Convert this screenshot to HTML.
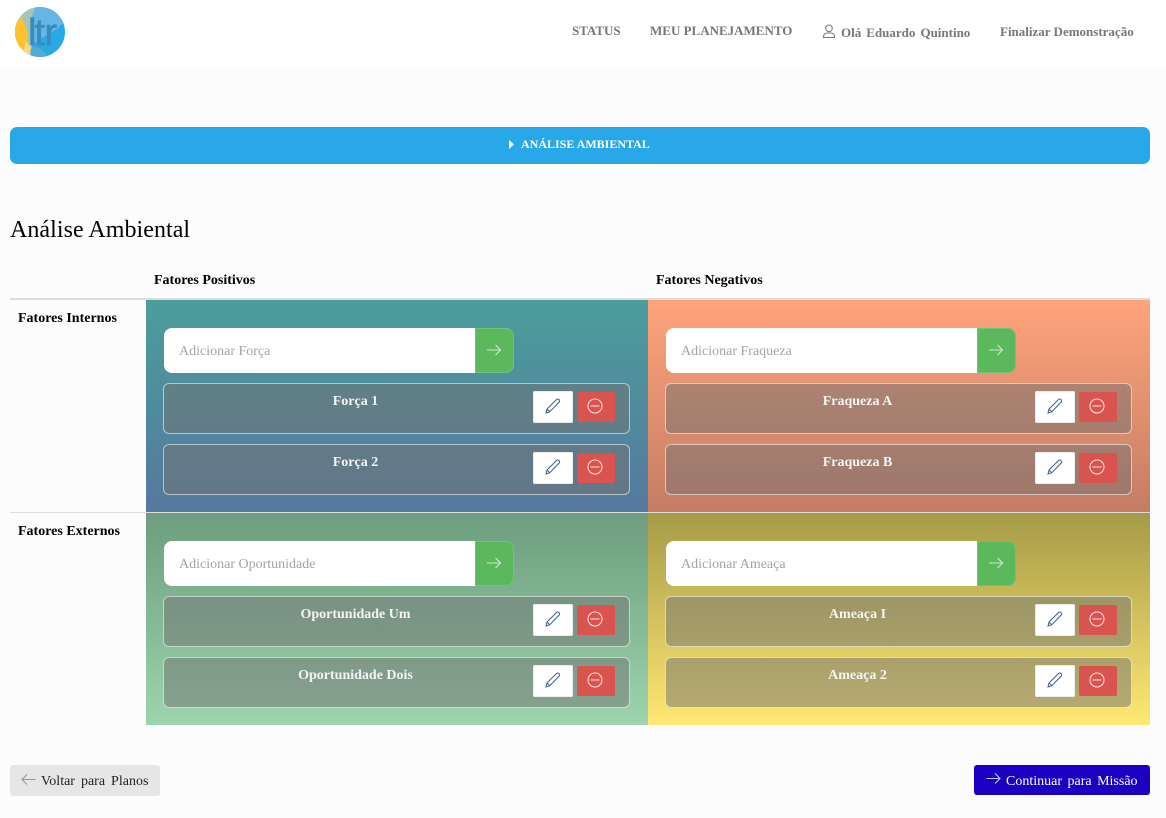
<!DOCTYPE html>
<html lang="pt"><head><meta charset="utf-8"><title>Análise Ambiental</title>
<style>
html,body{margin:0;padding:0}
body{width:1166px;height:818px;position:relative;overflow:hidden;background:#fcfcfc;font-family:"Liberation Serif",serif;color:#000}
.a{position:absolute;white-space:nowrap}
.nav{font-weight:700;font-size:13px;color:#777;line-height:16px}
.cell{position:absolute}
.inp{position:absolute;left:18px;width:311px;height:45px;background:#fff;border-radius:8px 0 0 8px;font-size:14px;color:#a4a4a4;line-height:47px;text-indent:15px}
.go{position:absolute;left:329px;width:39px;height:45px;background:#5cb85c;border-radius:0 8px 8px 0;box-shadow:inset 0 0 0 1px #74c27a}
.go svg{position:absolute;left:11px;top:14px}
.item{position:absolute;left:17px;width:465px;height:49px;border:1px solid rgba(225,225,225,.7);border-radius:6px;background:rgba(114,114,114,.5);background-clip:padding-box}
.t{position:absolute;left:0;width:383px;top:9px;text-align:center;font-weight:700;font-size:14px;line-height:18px;color:#f4f4f4}
.ed{position:absolute;left:369px;top:7px;width:40px;height:32px;background:#fff;border-radius:2px;box-shadow:inset 0 0 0 1px #ececec}
.ed svg{position:absolute;left:12px;top:7px}
.rm{position:absolute;left:413px;top:8px;width:38px;height:30px;background:#d9534f;border-radius:2px}
.rm svg{position:absolute;left:10px;top:6px}
.hd{font-weight:700;font-size:14px;line-height:18px}
</style></head><body>

<div class="a" style="left:0;top:0;width:1166px;height:67px;background:#fff"></div>
<svg class="a" style="left:15px;top:7px" width="50" height="50" viewBox="0 0 50 50">
<defs><clipPath id="c"><circle cx="25" cy="25" r="25"/></clipPath></defs>
<g clip-path="url(#c)">
<rect width="50" height="50" fill="#29a8e8"/>
<path d="M0 0H21L17 10 17 40 13 50H0Z" fill="#a3c7b4"/>
<path d="M0 8H4L8 13 13 27 12 37 9 42 0 42Z" fill="#fec22e"/>
<path d="M11 35 16 40 15 50 8 44Z" fill="#fbd77e"/>
<path d="M20 0H50V14L42 22 25 32 17 38 17 10Z" fill="#66b5e4"/>
<path d="M15 50 17 38 27 43 34 50Z" fill="#52abd1"/>
</g>
<text y="38" font-family="Liberation Sans,sans-serif" font-size="38" fill="#3a8cbd" stroke="#3a8cbd" stroke-width=".6"><tspan x="13">l</tspan><tspan x="19.500">t</tspan><tspan x="29.500">r</tspan></text>
</svg>

<div class="a nav" style="left:572px;top:23px">STATUS</div>
<div class="a nav" style="left:650px;top:23px">MEU PLANEJAMENTO</div>
<svg class="a" style="left:822px;top:24px" width="14" height="15" viewBox="0 0 14 15" fill="none" stroke="#777" stroke-width="1.1"><circle cx="7" cy="4.3" r="3.3"/><path d="M1.5 13.5c0-3 1.5-4.5 3.5-4.5h4c2 0 3.500 1.500 3.500 4.500z"/></svg>
<div class="a nav" style="left:841px;top:25px;word-spacing:1.800px">Olá Eduardo Quintino</div>
<div class="a nav" style="left:1000px;top:24px">Finalizar Demonstração</div>

<div class="a" style="left:10px;top:127px;width:1140px;height:37px;background:#29a8e9;border-radius:7px"></div>
<svg class="a" style="left:509px;top:140px" width="5" height="9"><path d="M0 0 5 4.500 0 9z" fill="#fff"/></svg>
<div class="a" style="left:521px;top:136px;font-weight:700;font-size:12px;line-height:17px;color:#fff">ANÁLISE AMBIENTAL</div>

<div class="a" style="left:10px;top:215px;font-size:24px;line-height:30px;letter-spacing:.05px">Análise Ambiental</div>
<div class="a hd" style="left:154px;top:272px">Fatores Positivos</div>
<div class="a hd" style="left:656px;top:272px">Fatores Negativos</div>
<div class="a" style="left:10px;top:298px;width:1140px;height:2px;background:#ddd"></div>
<div class="a hd" style="left:18px;top:310px">Fatores Internos</div>
<div class="a hd" style="left:18px;top:523px">Fatores Externos</div>

<div class="cell" style="left:146px;top:300px;width:502px;height:212px;background:linear-gradient(#4a9e9b,#56789f)">
<div class="inp" style="top:28px">Adicionar Força</div>
<div class="go" style="top:28px"><svg width="16" height="16" viewBox="0 0 16 16" fill="none" stroke="#cfe9cf" stroke-width="1.1"><path d="M1 8H14.500M9.500 3 14.500 8 9.500 13"/></svg></div>
<div class="item" style="top:83px"><div class="t">Força 1</div><div class="ed"><svg width="16" height="16" viewBox="0 0 16 16" fill="none" stroke="#3b5f8a" stroke-width="1"><path d="M1 15 2 11 11.500 1.500Q12.800.5 14 1.600 15.200 2.900 14.200 4L4.800 13.700zM2 11 4.800 13.700"/></svg></div><div class="rm"><svg width="16" height="16" viewBox="0 0 16 16" fill="none" stroke="#f6d9d8" stroke-width="1.1"><circle cx="8" cy="8" r="7"/><path d="M3.500 8H12.500"/></svg></div></div>
<div class="item" style="top:144px"><div class="t">Força 2</div><div class="ed"><svg width="16" height="16" viewBox="0 0 16 16" fill="none" stroke="#3b5f8a" stroke-width="1"><path d="M1 15 2 11 11.500 1.500Q12.800.5 14 1.600 15.200 2.900 14.200 4L4.800 13.700zM2 11 4.800 13.700"/></svg></div><div class="rm"><svg width="16" height="16" viewBox="0 0 16 16" fill="none" stroke="#f6d9d8" stroke-width="1.1"><circle cx="8" cy="8" r="7"/><path d="M3.500 8H12.500"/></svg></div></div>
</div>

<div class="cell" style="left:648px;top:300px;width:502px;height:212px;background:linear-gradient(#ffa47c,#c47c63)">
<div class="inp" style="top:28px">Adicionar Fraqueza</div>
<div class="go" style="top:28px"><svg width="16" height="16" viewBox="0 0 16 16" fill="none" stroke="#cfe9cf" stroke-width="1.1"><path d="M1 8H14.500M9.500 3 14.500 8 9.500 13"/></svg></div>
<div class="item" style="top:83px"><div class="t">Fraqueza A</div><div class="ed"><svg width="16" height="16" viewBox="0 0 16 16" fill="none" stroke="#3b5f8a" stroke-width="1"><path d="M1 15 2 11 11.500 1.500Q12.800.5 14 1.600 15.200 2.900 14.200 4L4.800 13.700zM2 11 4.800 13.700"/></svg></div><div class="rm"><svg width="16" height="16" viewBox="0 0 16 16" fill="none" stroke="#f6d9d8" stroke-width="1.1"><circle cx="8" cy="8" r="7"/><path d="M3.500 8H12.500"/></svg></div></div>
<div class="item" style="top:144px"><div class="t">Fraqueza B</div><div class="ed"><svg width="16" height="16" viewBox="0 0 16 16" fill="none" stroke="#3b5f8a" stroke-width="1"><path d="M1 15 2 11 11.500 1.500Q12.800.5 14 1.600 15.200 2.900 14.200 4L4.800 13.700zM2 11 4.800 13.700"/></svg></div><div class="rm"><svg width="16" height="16" viewBox="0 0 16 16" fill="none" stroke="#f6d9d8" stroke-width="1.1"><circle cx="8" cy="8" r="7"/><path d="M3.500 8H12.500"/></svg></div></div>
</div>

<div class="a" style="left:10px;top:512px;width:1140px;height:1px;background:#ddd;z-index:2"></div>

<div class="cell" style="left:146px;top:513px;width:502px;height:212px;background:linear-gradient(#6d9d7e,#9dd4ae)">
<div class="inp" style="top:28px">Adicionar Oportunidade</div>
<div class="go" style="top:28px"><svg width="16" height="16" viewBox="0 0 16 16" fill="none" stroke="#cfe9cf" stroke-width="1.1"><path d="M1 8H14.500M9.500 3 14.500 8 9.500 13"/></svg></div>
<div class="item" style="top:83px"><div class="t">Oportunidade Um</div><div class="ed"><svg width="16" height="16" viewBox="0 0 16 16" fill="none" stroke="#3b5f8a" stroke-width="1"><path d="M1 15 2 11 11.500 1.500Q12.800.5 14 1.600 15.200 2.900 14.200 4L4.800 13.700zM2 11 4.800 13.700"/></svg></div><div class="rm"><svg width="16" height="16" viewBox="0 0 16 16" fill="none" stroke="#f6d9d8" stroke-width="1.1"><circle cx="8" cy="8" r="7"/><path d="M3.500 8H12.500"/></svg></div></div>
<div class="item" style="top:144px"><div class="t">Oportunidade Dois</div><div class="ed"><svg width="16" height="16" viewBox="0 0 16 16" fill="none" stroke="#3b5f8a" stroke-width="1"><path d="M1 15 2 11 11.500 1.500Q12.800.5 14 1.600 15.200 2.900 14.200 4L4.800 13.700zM2 11 4.800 13.700"/></svg></div><div class="rm"><svg width="16" height="16" viewBox="0 0 16 16" fill="none" stroke="#f6d9d8" stroke-width="1.1"><circle cx="8" cy="8" r="7"/><path d="M3.500 8H12.500"/></svg></div></div>
</div>

<div class="cell" style="left:648px;top:513px;width:502px;height:212px;background:linear-gradient(#a59a47,#ffe873)">
<div class="inp" style="top:28px">Adicionar Ameaça</div>
<div class="go" style="top:28px"><svg width="16" height="16" viewBox="0 0 16 16" fill="none" stroke="#cfe9cf" stroke-width="1.1"><path d="M1 8H14.500M9.500 3 14.500 8 9.500 13"/></svg></div>
<div class="item" style="top:83px"><div class="t">Ameaça I</div><div class="ed"><svg width="16" height="16" viewBox="0 0 16 16" fill="none" stroke="#3b5f8a" stroke-width="1"><path d="M1 15 2 11 11.500 1.500Q12.800.5 14 1.600 15.200 2.900 14.200 4L4.800 13.700zM2 11 4.800 13.700"/></svg></div><div class="rm"><svg width="16" height="16" viewBox="0 0 16 16" fill="none" stroke="#f6d9d8" stroke-width="1.1"><circle cx="8" cy="8" r="7"/><path d="M3.500 8H12.500"/></svg></div></div>
<div class="item" style="top:144px"><div class="t">Ameaça 2</div><div class="ed"><svg width="16" height="16" viewBox="0 0 16 16" fill="none" stroke="#3b5f8a" stroke-width="1"><path d="M1 15 2 11 11.500 1.500Q12.800.5 14 1.600 15.200 2.900 14.200 4L4.800 13.700zM2 11 4.800 13.700"/></svg></div><div class="rm"><svg width="16" height="16" viewBox="0 0 16 16" fill="none" stroke="#f6d9d8" stroke-width="1.1"><circle cx="8" cy="8" r="7"/><path d="M3.500 8H12.500"/></svg></div></div>
</div>

<div class="a" style="left:10px;top:765px;width:150px;height:31px;background:#e6e6e6;border-radius:3px"></div>
<svg class="a" style="left:21px;top:772px" width="15" height="15" viewBox="0 0 15 15" fill="none" stroke="#999" stroke-width="1.1"><path d="M14.500 7.500H1M6 2.500 1 7.500 6 12.500"/></svg>
<div class="a" style="left:41px;top:773px;font-size:14px;line-height:17px;color:#222;word-spacing:2.500px">Voltar para Planos</div>

<div class="a" style="left:974px;top:765px;width:176px;height:30px;background:#1b00c2;border-radius:3px"></div>
<svg class="a" style="left:986px;top:771px" width="15" height="15" viewBox="0 0 15 15" fill="none" stroke="#cfc8f5" stroke-width="1.1"><path d="M.5 7.500H14M9 2.500 14 7.500 9 12.500"/></svg>
<div class="a" style="left:1006px;top:773px;font-size:14px;line-height:17px;color:#fff;word-spacing:2px">Continuar para Missão</div>

</body></html>
